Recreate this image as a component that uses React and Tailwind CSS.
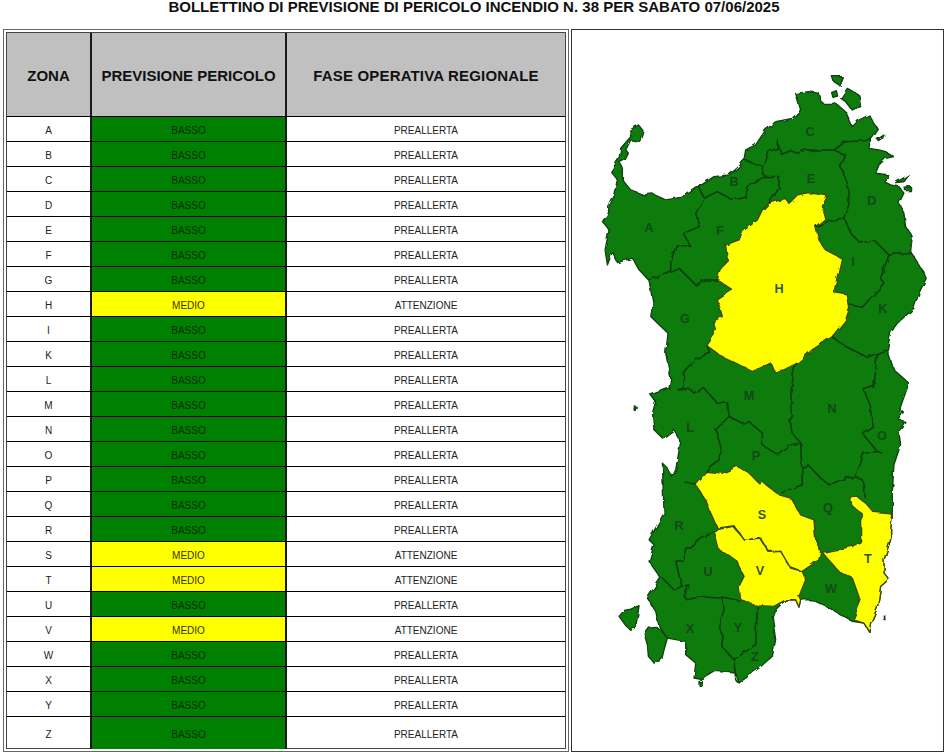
const zones = [
  ["A", 0], ["B", 0], ["C", 0], ["D", 0], ["E", 0], ["F", 0], ["G", 0], ["H", 1], ["I", 0], ["K", 0], ["L", 0], ["M", 0], ["N", 0],
  ["O", 0], ["P", 0], ["Q", 0], ["R", 0], ["S", 1], ["T", 1], ["U", 0], ["V", 1], ["W", 0], ["X", 0], ["Y", 0], ["Z", 0],
];

// map points are in 3x pixels, measured from (590,70) on the page
const mainland =
  "M100,330 100,295 92,278 108,270 118,250 110,240 125,210 155,215 165,185 148,165 122,180 125,200 95,235 90,265 65,305 85,330 75,370 60,400 58,430 40,455 60,480 48,540 55,585 70,545 85,578 130,565 150,600 180,632 192,700 185,740 237,790 230,850 245,925 240,955 185,975 200,995 190,1030 195,1080 220,1105 255,1080 275,1115 260,1200 250,1222 235,1195 220,1180 225,1330 180,1410 195,1425 180,1475 215,1525 175,1585 200,1625 210,1670 235,1705 290,1715 290,1755 320,1780 315,1825 340,1830 380,1805 440,1810 450,1840 510,1795 550,1760 560,1710 550,1640 555,1625 590,1590 620,1590 630,1612 635,1590 670,1590 730,1620 790,1655 825,1660 840,1685 845,1660 865,1615 875,1550 900,1528 885,1510 885,1470 905,1410 905,1380 910,1340 910,1270 915,1185 935,1125 930,1085 948,1055 930,1050 935,1010 960,940 915,900 895,840 905,790 925,760 975,715 990,670 1012,625 1000,600 965,545 970,500 950,470 945,430 930,400 945,370 930,350 905,345 885,335 900,315 860,310 870,285 890,265 915,260 890,245 870,240 840,235 845,205 865,175 840,135 810,150 790,170 770,125 740,100 700,100 690,70 660,65 620,70 635,120 610,145 560,155 530,180 500,225 470,240 465,270 450,290 420,315 375,320 330,350 280,382 230,390 190,372 165,375 125,360 Z";

const islands = [
  "M730,20 760,20 750,45 735,35Z",
  "M728,68 742,62 746,78 732,82Z",
  "M755,85 775,55 810,75 815,110 790,120 770,95Z",
  "M865,208 885,195 882,203 868,212Z",
  "M920,338 960,315 945,336Z",
  "M945,352 965,350 965,362 950,362Z",
  "M90,1640 105,1622 125,1618 150,1608 145,1640 140,1672 125,1682 108,1665Z",
  "M165,1690 178,1672 198,1670 215,1680 235,1705 225,1740 218,1770 195,1780 178,1760 175,1725Z",
  "M136,1008 141,1010 138,1022 135,1020Z",
  "M938,1023 943,1024 942,1030 938,1029Z",
  "M883,1636 887,1636 888,1650 884,1648Z",
  "M330,1835 340,1836 340,1848 330,1847Z",
];

const yellowZones = [
  "M540,400 590,385 600,400 625,375 660,368 715,378 700,410 710,445 680,470 690,510 710,540 758,565 745,620 735,668 775,675 782,715 770,750 730,800 670,840 625,880 585,900 555,905 545,880 490,905 440,880 390,855 350,825 380,780 372,755 400,740 385,690 430,660 385,630 395,590 415,570 410,525 450,510 460,485 505,450 520,420Z",
  "M318,1242 350,1205 400,1210 445,1190 480,1210 515,1245 525,1240 570,1275 605,1285 635,1335 675,1350 680,1410 695,1445 690,1470 640,1505 600,1490 575,1445 540,1445 515,1405 470,1415 435,1368 385,1375 365,1330 350,1290Z",
  "M375,1382 432,1370 470,1415 515,1408 540,1448 575,1445 605,1495 640,1505 650,1530 630,1580 635,1590 630,1612 620,1590 590,1590 555,1610 505,1608 455,1590 450,1550 465,1520 440,1470 390,1440Z",
  "M785,1292 792,1280 805,1280 830,1300 855,1328 905,1332 910,1340 905,1380 905,1410 885,1470 885,1510 900,1528 875,1550 865,1615 845,1660 840,1685 825,1660 792,1650 815,1595 790,1525 750,1505 700,1448 790,1430 815,1415 815,1350 823,1335 792,1310Z",
];

const borders = [
  "M465,270 525,290 520,310 530,320",
  "M525,290 540,245 565,235 565,210 575,250 600,240 625,250 650,240 735,240 770,255 755,290 775,340 780,400 768,448 715,455 680,470",
  "M735,240 770,215 830,212 845,205",
  "M768,448 785,490 815,520 855,510 900,555 965,547",
  "M900,555 875,625 885,640 820,712 782,705",
  "M330,350 345,385 385,365 425,388 465,380 485,340 530,320 570,320 570,355 540,400",
  "M345,385 320,430 330,470 285,490 305,530 262,525 245,575 245,608 180,630",
  "M245,608 270,595 320,645 345,630 385,630",
  "M350,825 365,850 320,865 285,905 280,960 265,960",
  "M730,800 770,830 835,862 865,850 895,840",
  "M625,880 615,900 605,970 610,1030 600,1050 610,1090 635,1120",
  "M865,850 860,900 855,950 825,960 845,1010 850,1070 820,1090 865,1145 880,1150",
  "M865,1145 825,1150 800,1222 770,1225 720,1245 695,1225 660,1188 638,1192 635,1120",
  "M800,1222 820,1230 830,1285",
  "M265,960 300,955 315,970 340,950 385,1000 415,995 420,1040 460,1060 480,1055 520,1090 520,1125 565,1155 600,1125 635,1120",
  "M420,1040 380,1080 395,1130 390,1170 363,1190 350,1205",
  "M285,1240 318,1242",
  "M638,1192 640,1245 575,1270",
  "M375,1382 350,1395 305,1435 290,1435 285,1470 260,1475 278,1550 255,1560 220,1525",
  "M278,1550 300,1545 285,1580 295,1590 330,1582 400,1585 455,1595",
  "M400,1585 405,1620 388,1670 402,1700 398,1730 435,1770 440,1830 448,1840",
  "M435,1770 500,1725 505,1610",
];

const labels = [
  ["A", 650, 227], ["B", 735, 181], ["C", 811, 131], ["D", 873, 200], ["E", 812, 178], ["F", 721, 230], ["G", 686, 318],
  ["H", 780, 288], ["I", 854, 261], ["K", 884, 308], ["L", 691, 428], ["M", 750, 396], ["N", 833, 409], ["O", 883, 436],
  ["P", 757, 456], ["Q", 829, 508], ["R", 680, 526], ["S", 763, 515], ["T", 869, 559], ["U", 709, 572], ["V", 761, 571],
  ["W", 832, 589], ["X", 691, 629], ["Y", 739, 628], ["Z", 756, 657],
];

function SardiniaMap() {
  return (
    <svg viewBox="0 0 1020 1900" className="block w-[340px] h-[633px]">
      <defs>
        <filter id="rough" x="-5%" y="-5%" width="110%" height="110%">
          <feTurbulence type="fractalNoise" baseFrequency="0.035" numOctaves="2" seed="4" />
          <feDisplacementMap in="SourceGraphic" scale="14" />
        </filter>
      </defs>
      <g filter="url(#rough)">
        <g fill="#087b08" stroke="#123f12" strokeWidth="4" strokeLinejoin="round">
          <path d={mainland} />
          {islands.map((d) => (
            <path key={d} d={d} />
          ))}
        </g>
        <g fill="#ffff00" stroke="#3a4a08" strokeWidth="4" strokeLinejoin="round">
          {yellowZones.map((d) => (
            <path key={d} d={d} />
          ))}
        </g>
        <g fill="none" stroke="#0f3a0f" strokeWidth="4.5" strokeLinejoin="round">
          {borders.map((d) => (
            <path key={d} d={d} />
          ))}
        </g>
      </g>
      {labels.map(([name, x, y]) => (
        <text
          key={name}
          x={(x - 590) * 3}
          y={(y - 70) * 3}
          dy="14"
          textAnchor="middle"
          fontSize="38"
          fontWeight="700"
          fill="#14421a"
          fillOpacity="0.9"
        >
          {name}
        </text>
      ))}
    </svg>
  );
}

function ZoneRow({ zone, medium, last }) {
  return (
    <div className={`flex border-t border-black text-[10px] text-[#222] ${last ? "h-[33px]" : "h-[25px]"}`}>
      <div className="w-[83px] pt-[2px] flex items-center justify-center">{zone}</div>
      <div
        className={`w-[197px] pt-[2px] flex items-center justify-center border-x-2 border-[#1a1a1a] ${
          medium ? "bg-[#ffff00] text-[#333300]" : "bg-[#008000] text-[#052e05]"
        }`}
      >
        {medium ? "MEDIO" : "BASSO"}
      </div>
      <div className="flex-1 pt-[2px] flex items-center justify-center">{medium ? "ATTENZIONE" : "PREALLERTA"}</div>
    </div>
  );
}

export default function App() {
  return (
    <div className="w-[946px] h-[752px] overflow-hidden bg-white font-['Liberation_Sans',Arial,sans-serif]">
      <h1 className="h-[29px] pl-[2px] text-center text-[15px] leading-[14px] tracking-[0.01px] font-bold text-[#111]">
        BOLLETTINO DI PREVISIONE DI PERICOLO INCENDIO N. 38 PER SABATO 07/06/2025
      </h1>
      <div className="flex pl-[3px] gap-[2px]">
        <div className="w-[566px] h-[723px] border border-[#666] p-[2px]">
          <div className="h-full border border-[#444]">
            <div className="flex h-[83px] bg-[#c0c0c0] text-[15px] font-bold text-[#111]">
              <div className="w-[83px] pt-[3px] flex items-center justify-center">ZONA</div>
              <div className="w-[197px] pt-[3px] flex items-center justify-center border-x-2 border-[#1a1a1a]">PREVISIONE PERICOLO</div>
              <div className="flex-1 pt-[3px] flex items-center justify-center tracking-[0.17px]">FASE OPERATIVA REGIONALE</div>
            </div>
            {zones.map(([zone, medium], i) => (
              <ZoneRow key={zone} zone={zone} medium={medium === 1} last={i === zones.length - 1} />
            ))}
          </div>
        </div>
        <div className="w-[373px] h-[723px] border border-[#333] pl-[17px] pt-[40px]">
          <SardiniaMap />
        </div>
      </div>
    </div>
  );
}
